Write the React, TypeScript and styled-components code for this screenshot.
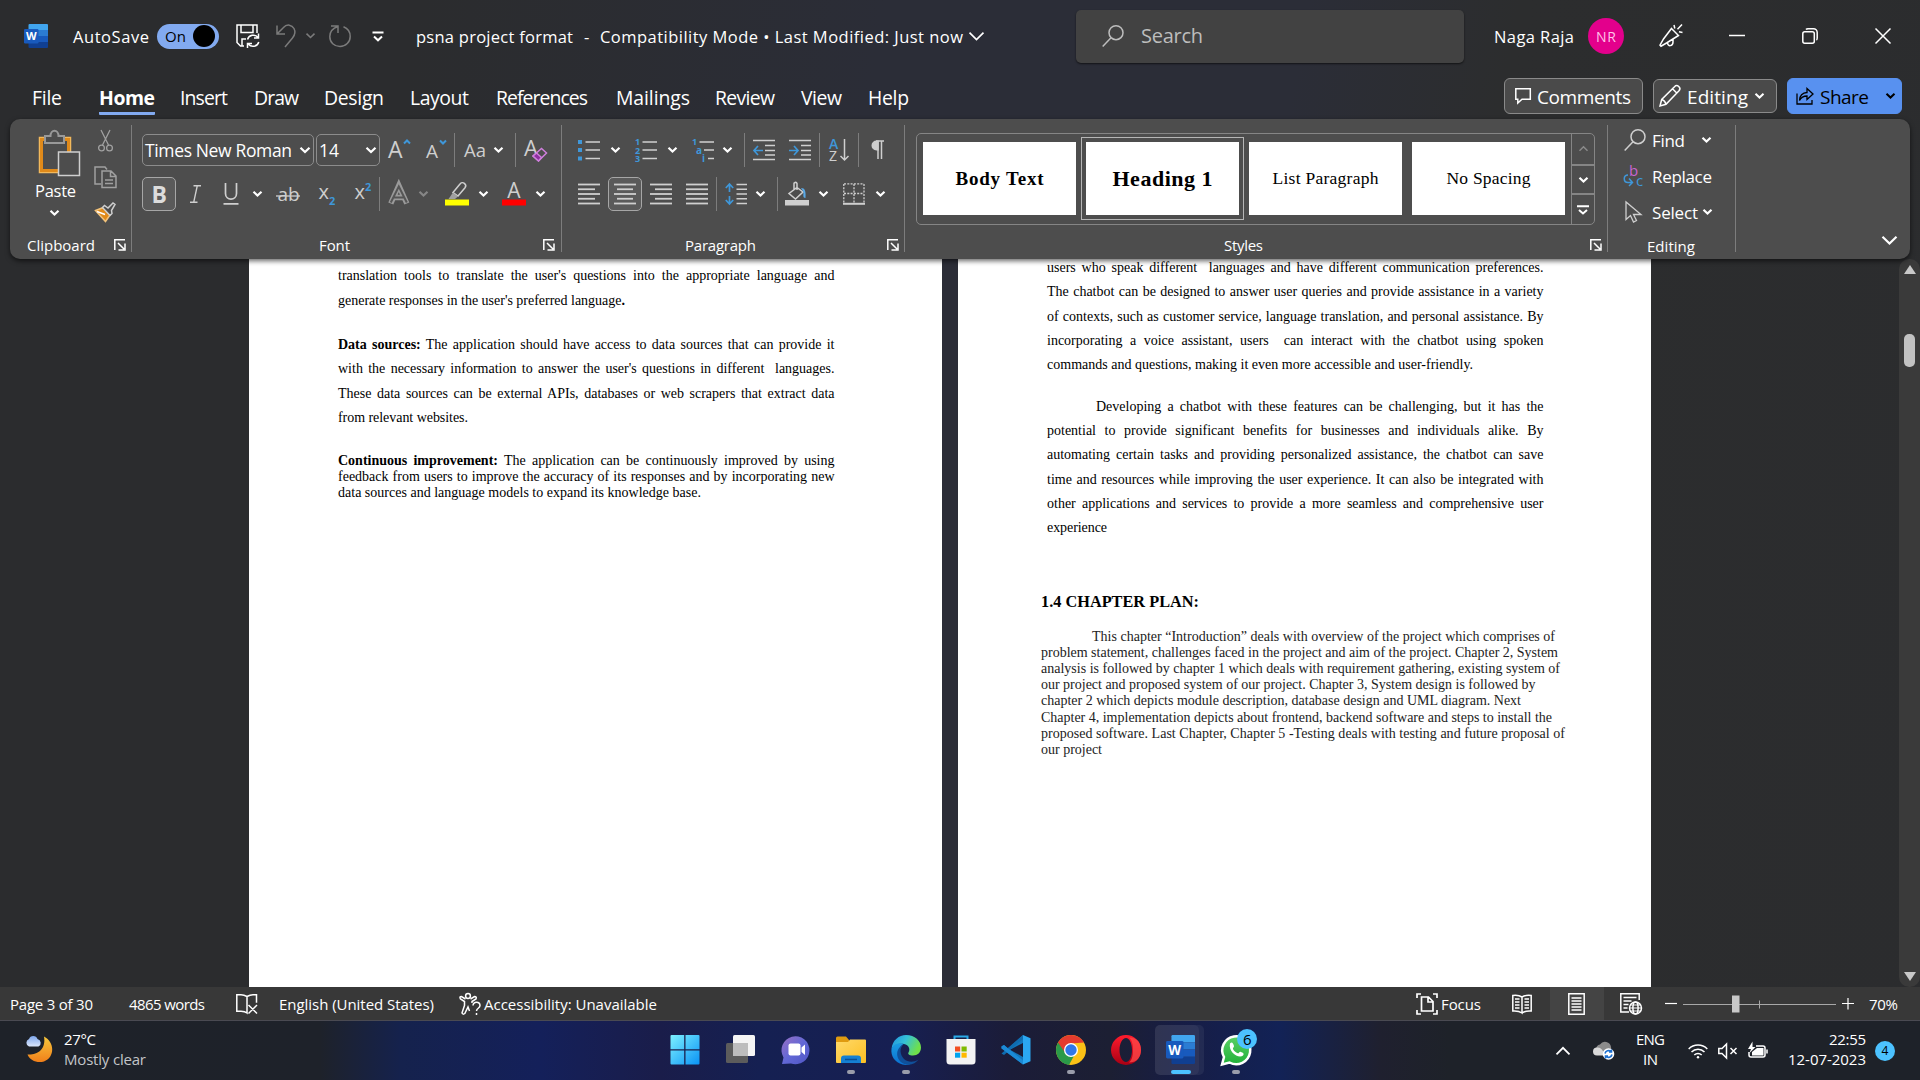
import React, { useLayoutEffect, useRef, useState } from 'react';
import styled, { createGlobalStyle, css } from 'styled-components';

const UI = '"Open Sans", "Noto Sans", sans-serif';
const SERIF = '"Liberation Serif", "Times New Roman", serif';
const INK = '#cfcfcf';
const BLUE = '#3f97d9';

const Global = createGlobalStyle`
  * { box-sizing: border-box; }
  html, body { margin: 0; padding: 0; overflow: hidden; }
  body { font-family: ${UI}; color: #fff; background: #2b2c2e; }
`;

const Screen = styled.div`
  width: 1920px;
  height: 1080px;
  display: flex;
  flex-direction: column;
  overflow: hidden;
  background: linear-gradient(100deg, #2b2c2e 0%, #2b2c2e 20%, #2b2d37 42%, #2b2d37 62%, #2c2d2e 72%, #2b2c2e 100%);
`;

/* ---------- shared pieces ---------- */

const FitSpan = styled.span<{ $size: number; $w: number; $color?: string; $weight?: number; $serif?: boolean }>`
  display: block;
  flex: none;
  width: ${(p) => p.$w}px;
  font-family: ${(p) => (p.$serif ? SERIF : UI)};
  font-size: ${(p) => p.$size}px;
  font-weight: ${(p) => p.$weight ?? 400};
  color: ${(p) => p.$color ?? 'inherit'};
  white-space: pre;
`;

interface TextProps {
  w: number;
  size?: number;
  color?: string;
  weight?: number;
  serif?: boolean;
  justify?: boolean;
  children: React.ReactNode;
}

/* A single line of text that is tracked out (or justified) to a measure. */
function Text({ w, size = 15, color, weight, serif, justify, children }: TextProps) {
  const inner = useRef<HTMLSpanElement>(null);
  const [space, setSpace] = useState(0);
  useLayoutEffect(() => {
    const el = inner.current;
    if (!el) return;
    const text = el.textContent ?? '';
    const natural = el.getBoundingClientRect().width;
    const slots = justify ? text.split(' ').length - 1 : text.length - 1;
    if (slots > 0) setSpace((w - natural) / slots);
  }, []);
  return (
    <FitSpan $size={size} $w={w} $color={color} $weight={weight} $serif={serif}>
      <span ref={inner} style={justify ? { wordSpacing: space } : { letterSpacing: space }}>
        {children}
      </span>
    </FitSpan>
  );
}

const Slot = styled.div<{ $ml?: number; $w?: number }>`
  flex: none;
  display: flex;
  align-items: center;
  justify-content: center;
  margin-left: ${(p) => p.$ml ?? 0}px;
  ${(p) => p.$w && css`width: ${p.$w}px;`}
`;

const Svg = styled.svg`
  display: block;
  flex: none;
  overflow: visible;
  fill: none;
  stroke: ${INK};
  stroke-width: 1.5;
`;

const Glyph = styled.text<{ $size: number; $fill?: string; $weight?: number }>`
  font-family: ${UI};
  font-size: ${(p) => p.$size}px;
  font-weight: ${(p) => p.$weight ?? 400};
  fill: ${(p) => p.$fill ?? INK};
  stroke: none;
`;

const Chevron = ({ w = 9, color = '#fff', sw = 2.2, up }: { w?: number; color?: string; sw?: number; up?: boolean }) => (
  <Svg width={w} height={w / 2 + 1} viewBox={`0 0 ${w} ${w / 2 + 1}`} stroke={color}>
    <path
      stroke={color}
      strokeWidth={sw}
      d={up ? `M.5 ${w / 2 + 0.3}L${w / 2} .8L${w - 0.5} ${w / 2 + 0.3}` : `M.5 .7L${w / 2} ${w / 2}L${w - 0.5} .7`}
    />
  </Svg>
);

/* ---------- title bar ---------- */

const TitleBar = styled.header`
  flex: none;
  height: 72px;
  display: flex;
  align-items: center;
`;

const TitleText = styled.div<{ $ml: number }>`
  flex: none;
  margin-left: ${(p) => p.$ml}px;
  padding-top: 1px;
`;

const Toggle = styled.div`
  width: 62px;
  height: 25px;
  border-radius: 13px;
  background: #82aaf0;
  display: flex;
  align-items: center;
  justify-content: space-between;
  padding: 0 4px 0 8px;
  color: #000;
`;

const Knob = styled.div`
  width: 22px;
  height: 22px;
  border-radius: 50%;
  background: #000;
`;

const SearchBox = styled.div`
  width: 388px;
  height: 53px;
  padding-left: 26px;
  display: flex;
  align-items: center;
  gap: 17px;
  border-radius: 5px;
  background: #424242;
  box-shadow: 0 1px 2px rgba(0, 0, 0, 0.6);
`;

const SearchText = styled.div`
  margin-top: -2px;
`;

const Avatar = styled.div`
  width: 36px;
  height: 36px;
  border-radius: 50%;
  background: #e3008c;
  display: flex;
  align-items: center;
  justify-content: center;
`;

const WordLogo = ({ size = 24 }: { size?: number }) => (
  <Svg width={size} height={size} viewBox="0 0 24 24" stroke="none">
    <g stroke="none">
      <path d="M4.5 1a1 1 0 0 1 1-1h17.500a1 1 0 0 1 1 1v5H4.500z" fill="#41a5ee" />
      <path d="M4.500 6H24v6H4.500z" fill="#2b7cd3" />
      <path d="M4.500 12H24v6H4.500z" fill="#185abd" />
      <path d="M4.500 18H24v5a1 1 0 0 1-1 1H5.500a1 1 0 0 1-1-1z" fill="#103f91" />
      <rect x="0" y="5" width="14.500" height="14.500" rx="1.200" fill="#185abd" />
      <Glyph x="7.200" y="16.300" textAnchor="middle" $size={11} $fill="#fff" $weight={700}>W</Glyph>
    </g>
  </Svg>
);

function Title() {
  return (
    <TitleBar>
      <Slot $ml={24} $w={24}><WordLogo /></Slot>
      <Slot $ml={25}><Text w={76} size={16.5}>AutoSave</Text></Slot>
      <Slot $ml={8}>
        <Toggle>
          <Text w={21}>On</Text>
          <Knob />
        </Toggle>
      </Slot>
      <Slot $ml={17} $w={24}>
        <Svg width="24" height="24" viewBox="0 0 24 24">
          <g stroke="#fff">
            <path d="M8 22H4.500L1 18.500V1h20v8M5 1v7.500h12V1M6 22v-7h4" />
            <path d="M11.500 15.500a6 6 0 0 1 10.500-2M22.500 9.500v4.500h-4.500M22.800 18a6 6 0 0 1-10.500 2M11.500 24v-4.500H16" />
          </g>
        </Svg>
      </Slot>
      <Slot $ml={16} $w={20}>
        <Svg width="20" height="24" viewBox="0 0 20 24">
          <path stroke="#7b7b7b" d="M1 1.500V10h8M1.500 9.500L7.500 3.500C11-.5 16 1 18 4.500c1.800 3.500.5 7-1.500 9.500L9 23" />
        </Svg>
      </Slot>
      <Slot $ml={10} $w={9}><Chevron color="#7b7b7b" sw={1.6} /></Slot>
      <Slot $ml={14} $w={22}>
        <Svg width="22" height="24" viewBox="0 0 22 24">
          <path stroke="#7b7b7b" d="M2 2h7v7M9 2.500C3 4.500.8 8.500.8 12.500c0 6 4.500 10 10.200 10s10.200-4.500 10.200-10c0-4.500-2.500-8-6.700-9.700" />
        </Svg>
      </Slot>
      <Slot $ml={21} $w={12}>
        <Svg width="12" height="11" viewBox="0 0 12 11">
          <path stroke="#fff" strokeWidth="2" d="M.5 1.500h11M2 5.500L6 9.300l4-3.800" />
        </Svg>
      </Slot>
      <TitleText $ml={32}><Text w={157} size={16.5}>psna project format</Text></TitleText>
      <TitleText $ml={11}><Text w={5} size={16.5}>-</Text></TitleText>
      <TitleText $ml={11}><Text w={363} size={16.5}>Compatibility Mode • Last Modified: Just now</Text></TitleText>
      <Slot $ml={6} $w={15}><Chevron w={15} sw={1.7} /></Slot>
      <Slot $ml={92}>
        <SearchBox>
          <Svg width="22" height="22" viewBox="0 0 22 22">
            <g stroke="#bdbdbd"><circle cx="14" cy="7.700" r="7" /><path d="M9 12.700L.7 21.500" /></g>
          </Svg>
          <SearchText><Text w={62} size={20} color="#bdbdbd">Search</Text></SearchText>
        </SearchBox>
      </Slot>
      <TitleText $ml={30}><Text w={80} size={16.5}>Naga Raja</Text></TitleText>
      <Slot $ml={14}><Avatar><Text w={20} size={14} color="#ffc4e8">NR</Text></Avatar></Slot>
      <Slot $ml={35} $w={24}>
        <Svg width="24" height="24" viewBox="0 0 24 24">
          <path stroke="#fff" d="M12.500 4.500l7 7L7.500 19l-5.500 3.200L1 21.200 4.500 15zM8.500 18.500c0 4.500 5.500 4 5.500-.5v-3M15 1l.8 3.500M23 .5l-4.500 4.800M23.500 8.500l-3.500-.8" />
        </Svg>
      </Slot>
      <Slot $ml={46} $w={16}>
        <Svg width="16" height="16" viewBox="0 0 16 16"><path stroke="#fff" d="M0 7.500h16" /></Svg>
      </Slot>
      <Slot $ml={57} $w={16}>
        <Svg width="16" height="16" viewBox="0 0 16 16">
          <g stroke="#fff"><rect x=".8" y="3.800" width="11.500" height="11.500" rx="2" /><path d="M4 1.500Q4.500.8 6 .8h5.500a3.700 3.700 0 0 1 3.700 3.700v5.500q0 1.500-.8 2" /></g>
        </Svg>
      </Slot>
      <Slot $ml={57} $w={16}>
        <Svg width="16" height="16" viewBox="0 0 16 16"><path stroke="#fff" d="M.5 .5l15 15M15.500 .5l-15 15" /></Svg>
      </Slot>
    </TitleBar>
  );
}

/* ---------- tabs ---------- */

const TabRow = styled.nav`
  flex: none;
  height: 47px;
  display: flex;
  align-items: flex-start;
`;

const Tab = styled.div<{ $ml: number; $active?: boolean }>`
  flex: none;
  margin-left: ${(p) => p.$ml}px;
  margin-top: 12px;
  height: 31px;
  line-height: 28px;
  border-bottom: 3px solid ${(p) => (p.$active ? '#82aaf0' : 'transparent')};
  border-radius: 1px;
`;

const TabButton = styled.div<{ $ml: number; $w: number; $h: number; $share?: boolean }>`
  flex: none;
  margin-left: ${(p) => p.$ml}px;
  margin-top: ${(p) => 24 - p.$h / 2}px;
  width: ${(p) => p.$w}px;
  height: ${(p) => p.$h}px;
  display: flex;
  align-items: center;
  border-radius: 6px;
  color: ${(p) => (p.$share ? '#000' : '#fff')};
  background: ${(p) => (p.$share ? '#5891f0' : '#4a4a4a')};
  border: 1px solid ${(p) => (p.$share ? '#5891f0' : '#8a8a8a')};
`;

const TabButtonText = styled.div`
  margin-left: 6px;
  padding-top: 1px;
`;

const TABS: [string, number, number][] = [
  ['File', 32, 30], ['Home', 37, 56], ['Insert', 25, 48], ['Draw', 26, 45], ['Design', 25, 60],
  ['Layout', 26, 59], ['References', 27, 92], ['Mailings', 28, 74], ['Review', 25, 60], ['View', 26, 41], ['Help', 26, 41],
];

function Tabs() {
  return (
    <TabRow>
      {TABS.map(([name, ml, w]) => (
        <Tab key={name} $ml={ml} $active={name === 'Home'}>
          <Text w={w} size={19.4} weight={name === 'Home' ? 700 : 400}>{name}</Text>
        </Tab>
      ))}
      <TabButton $ml={595} $w={139} $h={36}>
        <Slot $ml={10} $w={16}>
          <Svg width="16" height="16" viewBox="0 0 16 16"><path stroke="#fff" d="M.8 .8h14.500v10.500H7L2.800 15v-3.700H.8z" /></Svg>
        </Slot>
        <TabButtonText><Text w={94} size={19}>Comments</Text></TabButtonText>
      </TabButton>
      <TabButton $ml={10} $w={124} $h={34}>
        <Slot $ml={5} $w={22}>
          <Svg width="22" height="22" viewBox="0 0 22 22"><path stroke="#fff" d="M1 21l1.700-6.500L15.500 1.700a2.800 2.800 0 0 1 4.500 4L7 19.300zM13.500 3.700l4.500 4.500M2.700 14.500c2 .5 3.500 2 4.300 4.800" /></Svg>
        </Slot>
        <TabButtonText><Text w={61} size={19}>Editing</Text></TabButtonText>
        <Slot $ml={7} $w={9}><Chevron sw={2} /></Slot>
      </TabButton>
      <TabButton $ml={10} $w={115} $h={36} $share>
        <Slot $ml={8} $w={18}>
          <Svg width="18" height="18" viewBox="0 0 18 18"><path stroke="#000" strokeWidth="1.300" d="M1 6.500V17h15v-4M3.500 13.500C3.500 9 6.500 5.500 11 5.500V1.500l6 5.500-6 5.500V9C7.500 9 5 10.500 3.500 13.500z" /></Svg>
        </Slot>
        <TabButtonText><Text w={49} size={19}>Share</Text></TabButtonText>
        <Slot $ml={17} $w={9}><Chevron color="#000" sw={2} /></Slot>
      </TabButton>
    </TabRow>
  );
}

/* ---------- ribbon ---------- */

const Ribbon = styled.section`
  flex: none;
  position: relative;
  z-index: 1;
  margin: 0 10px;
  height: 140px;
  display: flex;
  border-radius: 10px;
  background: #4d4d4d;
  box-shadow: 0 2px 5px rgba(0, 0, 0, 0.6);
`;

const Group = styled.div<{ $w: number }>`
  flex: none;
  width: ${(p) => p.$w}px;
  height: 127px;
  margin-top: 6px;
  border-right: 1px solid #7d7d7d;
  display: flex;
  flex-direction: column;
`;

const GroupBody = styled.div`
  flex: none;
  height: 108px;
  padding-top: 8px;
`;

const GroupFooter = styled.div`
  height: 23px;
  flex: none;
  display: flex;
  align-items: center;
`;

const ToolRow = styled.div<{ $h: number; $mt?: number }>`
  height: ${(p) => p.$h}px;
  margin-top: ${(p) => p.$mt ?? 0}px;
  display: flex;
  align-items: center;
`;

const Divider = styled.div<{ $ml: number }>`
  flex: none;
  width: 1px;
  height: 34px;
  margin-left: ${(p) => p.$ml}px;
  background: #7d7d7d;
`;

const Combo = styled.div<{ $ml: number; $w: number }>`
  flex: none;
  margin-left: ${(p) => p.$ml}px;
  width: ${(p) => p.$w}px;
  height: 32px;
  padding: 0 3px 0 2px;
  display: flex;
  align-items: center;
  justify-content: space-between;
  border: 1px solid #8c8c8c;
  border-radius: 5px;
`;

const Pressed = styled.div<{ $ml: number }>`
  flex: none;
  margin-left: ${(p) => p.$ml}px;
  width: 34px;
  height: 34px;
  display: flex;
  align-items: center;
  justify-content: center;
  border: 1px solid #a6a6a6;
  border-radius: 5px;
  background: #5a5a5a;
`;

const Launcher = () => (
  <Svg width="12" height="12" viewBox="0 0 12 12"><path stroke="#fff" d="M.8 11V.8H11M4 4l6 6M11 4.500V11H4.500" /></Svg>
);

const Drop = ({ ml, dim }: { ml: number; dim?: boolean }) => (
  <Slot $ml={ml} $w={9}><Chevron color={dim ? '#868686' : '#fff'} /></Slot>
);

const ClipCols = styled.div`
  flex: none;
  display: flex;
  height: 108px;
`;

const PasteCol = styled.div`
  width: 83px;
  display: flex;
  flex-direction: column;
  align-items: center;
  padding: 5px 0 0 15px;
`;

const SmallCol = styled.div`
  width: 24px;
  padding-top: 5px;
  display: flex;
  flex-direction: column;
  align-items: center;
  gap: 14px;
`;

const PasteLabel = styled.div`
  margin: 3px 7px 8px 0;
`;

const PasteDrop = styled.div`
  margin-right: 10px;
`;

function Clipboard() {
  return (
    <Group $w={122}>
      <ClipCols>
        <PasteCol>
          <Svg width="42" height="46" viewBox="0 0 42 46">
            <rect x="1.500" y="7.500" width="31" height="35" stroke="#f2b95c" strokeWidth="1.500" />
            <rect x="3.500" y="9.500" width="27" height="31" stroke="#e08a1a" strokeWidth="3" />
            <path d="M7 13V6h5.500c0-7 8-7 8 0H26v7z" fill="#4d4d4d" stroke="#999" strokeWidth="2" />
            <rect x="20.500" y="22" width="21" height="23.500" fill="#4d4d4d" stroke="#cfcfcf" />
          </Svg>
          <PasteLabel><Text w={41} size={16.5}>Paste</Text></PasteLabel>
          <PasteDrop><Chevron /></PasteDrop>
        </PasteCol>
        <SmallCol>
          <Svg width="15" height="22" viewBox="0 0 15 22">
            <g stroke="#a0a0a0" strokeWidth="1.300"><path d="M3 0l7.500 15M12 0L4.500 15" /><circle cx="3.500" cy="18" r="2.900" /><circle cx="11.500" cy="18" r="2.900" /></g>
          </Svg>
          <Svg width="23" height="22" viewBox="0 0 23 22">
            <path stroke="#a0a0a0" d="M7 18H1V1h10l2 2.500M8 5h9l5 5v11.500H8zM16.500 5v5.500H22M11 14h8M11 17.500h8" />
          </Svg>
          <Svg width="22" height="20" viewBox="0 0 22 20">
            <path d="M1.500 8.500L9.500 5.500 16 13l-4.500 6.500z" fill="#e08a1a" stroke="#f2c27a" />
            <path d="M3 9.500l8 3" stroke="#fff" />
            <path d="M8.500 5.500l2-2 3.500 2.500L19 1l2 1.500-3.500 6 .5 3-2 2z" fill="#4d4d4d" stroke="#cfcfcf" />
          </Svg>
        </SmallCol>
      </ClipCols>
      <GroupFooter>
        <Slot $ml={17}><Text w={68}>Clipboard</Text></Slot>
        <Slot $ml={19} $w={12}><Launcher /></Slot>
      </GroupFooter>
    </Group>
  );
}

function FontGroup() {
  return (
    <Group $w={430}>
      <GroupBody>
        <ToolRow $h={33}>
          <Combo $ml={10} $w={172}><Text w={147} size={17.5}>Times New Roman</Text><Chevron w={10} /></Combo>
          <Combo $ml={2} $w={64}><Text w={20} size={17.5}>14</Text><Chevron w={10} /></Combo>
          <Slot $ml={9} $w={22}>
            <Svg width="22" height="22" viewBox="0 0 22 22"><Glyph x="-1" y="18.500" $size={23}>A</Glyph><path stroke={BLUE} strokeWidth="2" d="M15 4.500l3-3 3 3" /></Svg>
          </Slot>
          <Slot $ml={16} $w={21}>
            <Svg width="21" height="22" viewBox="0 0 21 22"><Glyph x="-1" y="18.500" $size={19}>A</Glyph><path stroke={BLUE} strokeWidth="2" d="M13 1.500l3 3 3-3" /></Svg>
          </Slot>
          <Divider $ml={6} />
          <Slot $ml={9} $w={22}><Text w={22} size={18.5} color={INK}>Aa</Text></Slot>
          <Drop ml={8} />
          <Divider $ml={12} />
          <Slot $ml={8} $w={23}>
            <Svg width="23" height="24" viewBox="0 0 23 24">
              <Glyph x="0" y="18" $size={22}>A</Glyph>
              <path d="M9 18l8.500-7.500 5 4.500-8 8z" fill="#4d4d4d" stroke="#cf7fdc" />
              <path d="M9 18l3.500-3 5 4.500-3 3.500z" fill="#8e2fa0" stroke="#cf7fdc" />
            </Svg>
          </Slot>
        </ToolRow>
        <ToolRow $h={34} $mt={11}>
          <Pressed $ml={10}><Text w={15} size={23} weight={700} color="#dcdcdc">B</Text></Pressed>
          <Slot $ml={14} $w={11}>
            <Svg width="11" height="18" viewBox="0 0 11 18"><path strokeWidth="1.400" d="M3.500 .7H11M0 17.300h7.500M7.300 .7L3.700 17.300" /></Svg>
          </Slot>
          <Slot $ml={22} $w={16}>
            <Svg width="16" height="22" viewBox="0 0 16 22"><path strokeWidth="1.700" d="M2.500 0v10.500c0 7.500 11 7.500 11 0V0M.5 20.800h15" /></Svg>
          </Slot>
          <Drop ml={14} />
          <Slot $ml={14} $w={24}>
            <Svg width="24" height="20" viewBox="0 0 24 20"><Glyph x="1.500" y="17" $size={19}>ab</Glyph><path strokeWidth="1.300" d="M0 12h24" /></Svg>
          </Slot>
          <Slot $ml={19} $w={16}>
            <Svg width="16" height="22" viewBox="0 0 16 22"><Glyph x="-.5" y="16" $size={20}>x</Glyph><Glyph x="10" y="22" $size={11} $fill={BLUE} $weight={700}>2</Glyph></Svg>
          </Slot>
          <Slot $ml={20} $w={16}>
            <Svg width="16" height="22" viewBox="0 0 16 22"><Glyph x="-.5" y="16" $size={20}>x</Glyph><Glyph x="10" y="8" $size={11} $fill={BLUE} $weight={700}>2</Glyph></Svg>
          </Slot>
          <Divider $ml={8} />
          <Slot $ml={8} $w={22}>
            <Svg width="22" height="20" viewBox="0 0 22 20"><path stroke="#9a9a9a" strokeWidth="5.500" d="M2.800 19.500L10.800 1.500 18.800 19.500M6 13.500h10" /><path stroke="#555" strokeWidth="2" d="M2.800 18.500L10.800 2.500 18.800 18.500M6 13.500h10" /></Svg>
          </Slot>
          <Drop ml={9} dim />
          <Slot $ml={17} $w={24}>
            <Svg width="24" height="24" viewBox="0 0 24 24">
              <path d="M8 10.500l7-8.500a2.800 2.800 0 0 1 5 3.700L13 14z" />
              <path d="M8 10.500l5 4-3 2.500H3.500z" fill="#a0a0a0" stroke="none" />
              <path d="M0 17.500h24v6H0z" fill="#ff0" stroke="none" />
            </Svg>
          </Slot>
          <Drop ml={10} />
          <Slot $ml={14} $w={24}>
            <Svg width="24" height="24" viewBox="0 0 24 24"><Glyph x="12" y="15.500" textAnchor="middle" $size={21}>A</Glyph><path d="M0 17.500h24v6H0z" fill="#f00" stroke="none" /></Svg>
          </Slot>
          <Drop ml={10} />
        </ToolRow>
      </GroupBody>
      <GroupFooter>
        <Slot $ml={187}><Text w={31}>Font</Text></Slot>
        <Slot $ml={193} $w={12}><Launcher /></Slot>
      </GroupFooter>
    </Group>
  );
}

const Lines = ({ rows }: { rows: [number, number][] }) => (
  <Svg width="22" height="22" viewBox="0 0 22 22">
    {rows.map(([a, b], i) => <path key={i} strokeWidth="1.800" d={`M${a} ${1.5 + i * (19 / (rows.length - 1))}H${b}`} />)}
  </Svg>
);

function ParagraphGroup() {
  return (
    <Group $w={343}>
      <GroupBody>
        <ToolRow $h={33}>
          <Slot $ml={16} $w={22}>
            <Svg width="22" height="22" viewBox="0 0 22 22"><path d="M7.500 3h14.500M7.500 11h14.500M7.500 19.500h14.500" /><path fill={BLUE} stroke="none" d="M0 1h4v4H0zM0 9h4v4H0zM0 17.500h4v4H0z" /></Svg>
          </Slot>
          <Drop ml={11} />
          <Slot $ml={15} $w={22}>
            <Svg width="22" height="24" viewBox="0 0 22 24">
              <path d="M7.500 4h14.500M7.500 12h14.500M7.500 20.500h14.500" />
              <Glyph x="0" y="7" $size={9} $fill={BLUE} $weight={700}>1</Glyph><Glyph x="0" y="15.500" $size={9} $fill={BLUE} $weight={700}>2</Glyph><Glyph x="0" y="24" $size={9} $fill={BLUE} $weight={700}>3</Glyph>
            </Svg>
          </Slot>
          <Drop ml={11} />
          <Slot $ml={15} $w={22}>
            <Svg width="22" height="24" viewBox="0 0 22 24">
              <path d="M7.500 4H22M12 12h10M16 20.500h6" />
              <Glyph x="0" y="7" $size={9} $fill={BLUE} $weight={700}>1</Glyph><Glyph x="4" y="15.500" $size={10} $fill={BLUE} $weight={700}>a</Glyph><Glyph x="10" y="24" $size={10} $fill={BLUE} $weight={700}>i</Glyph>
            </Svg>
          </Slot>
          <Drop ml={9} />
          <Divider $ml={12} />
          <Slot $ml={8} $w={22}>
            <Svg width="22" height="22" viewBox="0 0 22 22"><path d="M0 1.500h22M12 6.500h10M12 11.500h10M12 16h10M0 20.500h22" /><path stroke={BLUE} strokeWidth="1.700" d="M1 11.500h9M5 7l-4 4.500 4 4.500" /></Svg>
          </Slot>
          <Slot $ml={14} $w={22}>
            <Svg width="22" height="22" viewBox="0 0 22 22"><path d="M0 1.500h22M12 6.500h10M12 11.500h10M12 16h10M0 20.500h22" /><path stroke={BLUE} strokeWidth="1.700" d="M0 11.500h9M5 7l4 4.500-4 4.500" /></Svg>
          </Slot>
          <Divider $ml={8} />
          <Slot $ml={9} $w={20}>
            <Svg width="20" height="24" viewBox="0 0 20 24">
              <Glyph x="0" y="10.500" $size={14} $fill={BLUE} $weight={600}>A</Glyph><Glyph x="0" y="23" $size={14}>Z</Glyph>
              <path d="M15.500 1v21M11.500 18l4 4 4-4" />
            </Svg>
          </Slot>
          <Divider $ml={9} />
          <Slot $ml={12} $w={13}>
            <Svg width="13" height="19" viewBox="0 0 13 19"><path d="M7 1.200H5.500a4 4 0 0 0 0 8.500H7z" fill={INK} /><path d="M7 1v18M10.500 1v18M5 1h8" /></Svg>
          </Slot>
        </ToolRow>
        <ToolRow $h={34} $mt={11}>
          <Slot $ml={16}><Lines rows={[[0, 22], [0, 17], [0, 22], [0, 17], [0, 22]]} /></Slot>
          <Pressed $ml={8}><Lines rows={[[0, 22], [3, 19], [0, 22], [3, 19], [0, 22]]} /></Pressed>
          <Slot $ml={8}><Lines rows={[[0, 22], [5, 22], [0, 22], [5, 22], [0, 22]]} /></Slot>
          <Slot $ml={14}><Lines rows={[[0, 22], [0, 22], [0, 22], [0, 22], [0, 22]]} /></Slot>
          <Divider $ml={8} />
          <Slot $ml={8} $w={22}>
            <Svg width="22" height="22" viewBox="0 0 22 22"><path d="M11.500 1.500H22M11.500 6.300H22M11.500 11H22M11.500 15.800H22M11.500 20.500H22" /><path stroke={BLUE} strokeWidth="1.700" d="M4.500 1v8M.8 5L4.500 1l3.700 4M4.500 13v8M.8 17l3.700 4L8.200 17" /></Svg>
          </Slot>
          <Drop ml={9} />
          <Divider $ml={12} />
          <Slot $ml={7} $w={24}>
            <Svg width="24" height="24" viewBox="0 0 24 24">
              <path d="M12 5.500l6 4.500-7.500 7L4 11.500zM12 8V1.500a1.500 1.500 0 0 0-3 1V8" />
              <path d="M16 6c4 0 5 3 4.500 10-3 0-2-3.500-2-6z" fill="#5aa9e6" stroke="none" />
              <path d="M0 18h24v5.500H0z" fill={INK} stroke="none" />
            </Svg>
          </Slot>
          <Drop ml={10} />
          <Slot $ml={15} $w={22}>
            <Svg width="22" height="22" viewBox="0 0 22 22"><path strokeDasharray="2 1.300" strokeWidth="1.300" d="M1 .8h20M1 10.500h20M.8 1v19M11 1v19M21 1v19" /><path strokeWidth="2" d="M0 20.800h22" /></Svg>
          </Slot>
          <Drop ml={11} />
        </ToolRow>
      </GroupBody>
      <GroupFooter>
        <Slot $ml={123}><Text w={71}>Paragraph</Text></Slot>
        <Slot $ml={131} $w={12}><Launcher /></Slot>
      </GroupFooter>
    </Group>
  );
}

const Gallery = styled.div`
  width: 679px;
  height: 92px;
  margin-left: 11px;
  display: flex;
  align-items: flex-start;
  padding-left: 1px;
  border: 1px solid #858585;
  border-radius: 5px;
`;

const StyleFrame = styled.div<{ $on?: boolean }>`
  flex: none;
  width: 163px;
  height: 83px;
  margin-top: 3px;
  padding: 4px;
  border: 1px solid ${(p) => (p.$on ? '#b5b5b5' : 'transparent')};
`;

const StyleCard = styled.div`
  width: 153px;
  height: 73px;
  display: flex;
  align-items: center;
  justify-content: center;
  background: #fff;
  color: #000;
`;

const Scroller = styled.div`
  margin-left: 1px;
  width: 24px;
  height: 90px;
  display: grid;
  grid-template-rows: 32px 29px 29px;
  border-left: 1px solid #858585;
`;

const ScrollCell = styled.div`
  display: flex;
  align-items: center;
  justify-content: center;
  &:not(:last-child) { border-bottom: 2px solid #858585; }
`;

const STYLES: [string, number, number, number][] = [
  ['Body Text', 88, 19, 700], ['Heading 1', 100, 22, 700], ['List Paragraph', 106, 17.5, 400], ['No Spacing', 84, 17.5, 400],
];

function StylesGroup() {
  return (
    <Group $w={703}>
      <GroupBody>
        <Gallery>
          {STYLES.map(([name, w, size, weight]) => (
            <StyleFrame key={name} $on={name === 'Heading 1'}>
              <StyleCard><Text serif w={w} size={size} weight={weight}>{name}</Text></StyleCard>
            </StyleFrame>
          ))}
          <Scroller>
            <ScrollCell><Chevron up color="#8a8a8a" sw={1.5} /></ScrollCell>
            <ScrollCell><Chevron /></ScrollCell>
            <ScrollCell><Svg width="12" height="10" viewBox="0 0 12 10"><path stroke="#fff" strokeWidth="2" d="M0 1.200h12M2 5l4 3.500L10 5" /></Svg></ScrollCell>
          </Scroller>
        </Gallery>
      </GroupBody>
      <GroupFooter>
        <Slot $ml={319}><Text w={39}>Styles</Text></Slot>
        <Slot $ml={327} $w={12}><Launcher /></Slot>
      </GroupFooter>
    </Group>
  );
}

const EditList = styled.div`
  flex: none;
  height: 106px;
  margin-top: -3px;
  margin-bottom: 6px;
  padding-left: 15px;
`;

const EditRow = styled.div`
  height: 36px;
  display: flex;
  align-items: center;
`;

const CollapseArea = styled.div`
  flex: 1;
  display: flex;
  justify-content: flex-end;
  align-items: flex-end;
  padding: 0 13px 15px 0;
`;

function EditingGroup() {
  return (
    <Group $w={128}>
      <EditList>
        <EditRow>
          <Slot $w={24}><Svg width="22" height="22" viewBox="0 0 22 22"><circle cx="14" cy="7.700" r="7" /><path d="M9 12.700L.7 21.500" /></Svg></Slot>
          <Slot $ml={5}><Text w={33} size={17}>Find</Text></Slot>
          <Drop ml={17} />
        </EditRow>
        <EditRow>
          <Slot $w={22}>
            <Svg width="22" height="24" viewBox="0 0 22 24">
              <Glyph x="6" y="11.500" $size={15} $fill="#c864d2">b</Glyph><Glyph x="13" y="22" $size={15} $fill={BLUE}>c</Glyph>
              <path stroke={BLUE} d="M5 11c-5 0-5 7.500 0 7.500h4M6 14.500l3.500 4L6 22" />
            </Svg>
          </Slot>
          <Slot $ml={7}><Text w={60} size={17}>Replace</Text></Slot>
        </EditRow>
        <EditRow>
          <Slot $ml={2} $w={17}><Svg width="17" height="22" viewBox="0 0 17 22"><path strokeWidth="1.300" d="M1 1v17.500l4.500-4 3 6.500 3-1.500-3-6H16z" /></Svg></Slot>
          <Slot $ml={10}><Text w={46} size={17}>Select</Text></Slot>
          <Drop ml={5} />
        </EditRow>
      </EditList>
      <GroupFooter>
        <Slot $ml={39}><Text w={48}>Editing</Text></Slot>
      </GroupFooter>
    </Group>
  );
}

/* ---------- document ---------- */

const DocArea = styled.main`
  flex: none;
  height: 728px;
  display: flex;
  overflow: hidden;
  color: #000;
`;

const Page = styled.article<{ $ml: number; $w: number; $pl: number }>`
  flex: none;
  margin-left: ${(p) => p.$ml}px;
  width: ${(p) => p.$w}px;
  height: 728px;
  padding-left: ${(p) => p.$pl}px;
  overflow: hidden;
  display: flex;
  flex-direction: column;
  background: #fff;
`;

const Para = styled.div<{ $mt: number; $lh: number; $ml?: number; $color?: string }>`
  flex: none;
  margin-top: ${(p) => p.$mt}px;
  margin-left: ${(p) => p.$ml ?? 0}px;
  line-height: ${(p) => p.$lh}px;
  color: ${(p) => p.$color ?? '#000'};
`;

const Indent = styled.div<{ $w: number }>`
  padding-left: ${(p) => p.$w}px;
`;

const J = ({ children, w = 496.5 }: { children: React.ReactNode; w?: number }) => (
  <Text serif justify w={w} size={14}>{children}</Text>
);
const L = ({ children, w }: { children: React.ReactNode; w: number }) => (
  <Text serif w={w} size={14}>{children}</Text>
);

const Filler = styled.div`
  flex: 1;
`;

const ScrollTrack = styled.div`
  flex: none;
  width: 21px;
  display: flex;
  flex-direction: column;
  align-items: center;
  padding-bottom: 6px;
  background: #3a3a3a;
  border-radius: 10px;
`;

const ArrowHead = styled.div<{ $down?: boolean; $mt: number }>`
  margin-top: ${(p) => p.$mt}px;
  border-left: 6px solid transparent;
  border-right: 6px solid transparent;
  ${(p) => (p.$down ? 'border-top: 9px solid #c8c8c8;' : 'border-bottom: 9px solid #c8c8c8;')}
`;

const Thumb = styled.div`
  width: 11px;
  height: 33px;
  margin-top: 60px;
  border-radius: 5px;
  background: #c2c2c2;
`;

function Document() {
  return (
    <DocArea>
      <Page $ml={249} $w={693} $pl={89}>
        <Para $mt={5} $lh={24.5}>
          <J>translation tools to translate the user's questions into the appropriate language and</J>
          <L w={287}>generate responses in the user's preferred language<b>.</b></L>
        </Para>
        <Para $mt={20} $lh={24.4}>
          <J><b>Data sources:</b> The application should have access to data sources that can provide it</J>
          <J>with the necessary information to answer the user's questions in different  languages.</J>
          <J>These data sources can be external APIs, databases or web scrapers that extract data</J>
          <L w={130}>from relevant websites.</L>
        </Para>
        <Para $mt={22.4} $lh={16}>
          <J><b>Continuous improvement:</b> The application can be continuously improved by using</J>
          <J>feedback from users to improve the accuracy of its responses and by incorporating new</J>
          <L w={363}>data sources and language models to expand its knowledge base.</L>
        </Para>
      </Page>
      <Page $ml={16} $w={693} $pl={83}>
        <Para $mt={-3} $lh={24.3} $ml={6}>
          <J>users who speak different  languages and have different communication preferences.</J>
          <J>The chatbot can be designed to answer user queries and provide assistance in a variety</J>
          <J>of contexts, such as customer service, language translation, and personal assistance. By</J>
          <J>incorporating a voice assistant, users  can interact with the chatbot using spoken</J>
          <L w={426}>commands and questions, making it even more accessible and user-friendly.</L>
        </Para>
        <Para $mt={17.5} $lh={24.25} $ml={6}>
          <Indent $w={49}><J w={447.5}>Developing a chatbot with these features can be challenging, but it has the</J></Indent>
          <J>potential to provide significant benefits for businesses and individuals alike. By</J>
          <J>automating certain tasks and providing personalized assistance, the chatbot can save</J>
          <J>time and resources while improving the user experience. It can also be integrated with</J>
          <J>other applications and services to provide a more seamless and comprehensive user</J>
          <L w={60}>experience</L>
        </Para>
        <Para $mt={52} $lh={20}>
          <Text serif w={158} size={16.3} weight={700}>1.4 CHAPTER PLAN:</Text>
        </Para>
        <Para $mt={16.5} $lh={16.13} $color="#222">
          <Indent $w={51}><L w={463}>This chapter “Introduction” deals with overview of the project which comprises of</L></Indent>
          <L w={517}>problem statement, challenges faced in the project and aim of the project. Chapter 2, System</L>
          <L w={519}>analysis is followed by chapter 1 which deals with requirement gathering, existing system of</L>
          <L w={494.5}>our project and proposed system of our project. Chapter 3, System design is followed by</L>
          <L w={480}>chapter 2 which depicts module description, database design and UML diagram. Next</L>
          <L w={511}>Chapter 4, implementation depicts about frontend, backend software and steps to install the</L>
          <L w={524}>proposed software. Last Chapter, Chapter 5 -Testing deals with testing and future proposal of</L>
          <L w={61}>our project</L>
        </Para>
      </Page>
      <Filler />
      <ScrollTrack>
        <ArrowHead $mt={6} />
        <Thumb />
        <Filler />
        <ArrowHead $down $mt={0} />
      </ScrollTrack>
    </DocArea>
  );
}

/* ---------- status bar ---------- */

const StatusBar = styled.footer`
  flex: none;
  height: 34px;
  display: flex;
  align-items: center;
  background: #383838;
  border-bottom: 1px solid #4a4a52;
`;

const ViewOn = styled.div`
  flex: none;
  width: 54px;
  height: 33px;
  margin-left: 18px;
  padding-right: 1px;
  display: flex;
  align-items: center;
  justify-content: center;
  background: #444;
`;

function Status() {
  return (
    <StatusBar>
      <Slot $ml={10}><Text w={83}>Page 3 of 30</Text></Slot>
      <Slot $ml={36}><Text w={76}>4865 words</Text></Slot>
      <Slot $ml={31} $w={22}>
        <Svg width="22" height="20" viewBox="0 0 22 20"><path stroke="#fff" d="M11 2.500Q8 .8 5 .8H.8v16.500H5q4 0 6 1.700V2.500Q14 .8 17 .8h3.500v8M12.500 11l8.500 8.500M21 11l-8.500 8.500" /></Svg>
      </Slot>
      <Slot $ml={21}><Text w={155}>English (United States)</Text></Slot>
      <Slot $ml={25} $w={22}>
        <Svg width="22" height="22" viewBox="0 0 22 22">
          <g stroke="#fff" strokeWidth="1.500"><circle cx="9" cy="3" r="2.400" /><path d="M6.500 6L2.500 3.500Q0 3.500 1.500 6l4 2.500v4L3 20q1 2 2.800.5L9 14l1.500 4M11.500 6l4-2.500q2.500 0 1.500 2.500l-4 2.500v1.500" /><path d="M14 12.500c0-4.500 7-4 7 0 0 3-3.500 2.500-3.500 5.500M17.500 20v2" /></g>
        </Svg>
      </Slot>
      <Slot $ml={3}><Text w={173}>Accessibility: Unavailable</Text></Slot>
      <Slot $ml={759} $w={22}>
        <Svg width="22" height="22" viewBox="0 0 22 22"><path stroke="#fff" strokeWidth="1.700" d="M5 1H1v4M17 1h4v4M5 21H1v-4M17 21h4v-4M5.500 4h7L17 8.500V18H5.500zM12 4v5h5" /></Svg>
      </Slot>
      <Slot $ml={3}><Text w={40}>Focus</Text></Slot>
      <Slot $ml={31} $w={20}>
        <Svg width="20" height="20" viewBox="0 0 20 20"><path stroke="#fff" d="M10 3Q6.500.8.8 1.500v15.500Q6.500 16.500 10 19zM10 3Q13.500.8 19.200 1.500v15.500Q13.500 16.500 10 19M3 5h4.500M3 8h4.500M3 11h4.500M3 14h4.500M12.500 5H17M12.500 8H17M12.500 11H17M12.500 14H17" /></Svg>
      </Slot>
      <ViewOn>
        <Svg width="17" height="22" viewBox="0 0 17 22"><path stroke="#fff" d="M.8 .8h15.400v20.400H.8zM3.500 5h10M3.500 8h10M3.500 11h10M3.500 14h10M3.500 17h10" /></Svg>
      </ViewOn>
      <Slot $ml={16} $w={22}>
        <Svg width="22" height="22" viewBox="0 0 22 22">
          <g stroke="#fff"><path d="M9 19H.8V.8h18.400V7M3.500 4.500h13M3.500 8h8M3.500 11.500h5M3.500 15h4" /><circle cx="15.500" cy="15" r="6" /><ellipse cx="15.500" cy="15" rx="2.600" ry="6" /><path d="M9.500 15h12M10.500 12h10M10.500 18h10" strokeWidth="1" /></g>
        </Svg>
      </Slot>
      <Slot $ml={23} $w={12}><Svg width="12" height="12" viewBox="0 0 12 12"><path stroke="#fff" strokeWidth="1.200" d="M0 5.500h12" /></Svg></Slot>
      <Slot $ml={6} $w={153}>
        <Svg width="153" height="18" viewBox="0 0 153 18"><path stroke="#a8a8a8" strokeWidth="1" d="M0 9.500h153M76.500 5.500v8" /><path fill="#c8c8c8" stroke="none" d="M49 .5h7.500v17H49z" /></Svg>
      </Slot>
      <Slot $ml={6} $w={12}><Svg width="12" height="12" viewBox="0 0 12 12"><path stroke="#fff" strokeWidth="1.200" d="M0 5.500h12M6 0v11.500" /></Svg></Slot>
      <Slot $ml={15}><Text w={29}>70%</Text></Slot>
    </StatusBar>
  );
}

/* ---------- taskbar ---------- */

const TaskBar = styled.div`
  flex: none;
  height: 59px;
  display: flex;
  align-items: center;
  background: linear-gradient(90deg, #1e2229 0, #1e222a 320px, #15224d 400px, #14205a 540px, #1a1d4a 660px, #152052 760px, #171f52 900px, #1b1c38 1010px, #1c1f33 1110px, #171d45 1180px, #122256 1280px, #1f202f 1380px, #1e2229 1450px, #1e2229 100%);
`;

const Stack = styled.div<{ $ml: number; $align?: string }>`
  flex: none;
  margin-left: ${(p) => p.$ml}px;
  display: flex;
  flex-direction: column;
  align-items: ${(p) => p.$align ?? 'flex-start'};
  line-height: 20px;
  margin-top: -3px;
`;

const Apps = styled.div`
  display: flex;
  height: 59px;
  margin-left: 512px;
`;

const AppIcon = styled.div<{ $active?: boolean; $shift?: number }>`
  flex: none;
  width: 55px;
  height: 50px;
  margin-top: 4px;
  display: flex;
  flex-direction: column;
  align-items: center;
  padding-top: 10px;
  padding-right: ${(p) => p.$shift ?? 0}px;
  position: relative;
  ${(p) => p.$active && css`
    &::before {
      content: '';
      position: absolute;
      inset: 0 9px 0 2px;
      border-radius: 5px;
      background: rgba(255, 255, 255, 0.1);
      box-shadow: 5px 0 0 rgba(255, 255, 255, 0.06);
    }
  `}
`;

const Running = styled.div<{ $active?: boolean }>`
  position: relative;
  margin-top: 5px;
  width: ${(p) => (p.$active ? 20 : 8)}px;
  height: 4px;
  border-radius: 2px;
  background: ${(p) => (p.$active ? '#4cc2ff' : '#9a9dab')};
`;

const Badge = styled.div`
  position: absolute;
  top: 4px;
  right: 6px;
  width: 20px;
  height: 20px;
  border-radius: 50%;
  background: #4cc2ff;
  color: #000;
  display: flex;
  align-items: center;
  justify-content: center;
`;

const Notice = styled.div`
  flex: none;
  margin-left: 9px;
  width: 20px;
  height: 20px;
  border-radius: 50%;
  background: #4cc2ff;
  color: #000;
  display: flex;
  align-items: center;
  justify-content: center;
`;

const Ico = styled.svg`
  display: block;
  position: relative;
  flex: none;
  width: 30px;
  height: 30px;
  overflow: visible;
`;

const WordWrap = styled.div`
  position: relative;
  height: 30px;
`;

const Gradients = () => (
  <defs>
    <linearGradient id="win" x1="0" y1="0" x2="1" y2="1"><stop offset="0" stopColor="#7df0ff" /><stop offset="1" stopColor="#0a93f5" /></linearGradient>
    <linearGradient id="chat" x1="0" y1="0" x2="1" y2="1"><stop offset="0" stopColor="#9a6fc4" /><stop offset=".5" stopColor="#6268d6" /><stop offset="1" stopColor="#4f55c4" /></linearGradient>
    <linearGradient id="fold" x1="0" y1="0" x2="1" y2="1"><stop offset="0" stopColor="#ffd96a" /><stop offset="1" stopColor="#fcbf22" /></linearGradient>
    <linearGradient id="edge" x1="0" y1="0" x2="1" y2=".4"><stop offset="0" stopColor="#1f8fe0" /><stop offset=".5" stopColor="#35c1d8" /><stop offset="1" stopColor="#6fe04a" /></linearGradient>
    <linearGradient id="edge2" x1="0" y1="0" x2="0" y2="1"><stop offset="0" stopColor="#1b9de2" /><stop offset="1" stopColor="#0a6fd0" /></linearGradient>
    <linearGradient id="op" x1="0" y1="0" x2="0" y2="1"><stop offset="0" stopColor="#ff1b2d" /><stop offset="1" stopColor="#a70014" /></linearGradient>
    <linearGradient id="moon" x1="0" y1="0" x2="0" y2="1"><stop offset="0" stopColor="#f8c83c" /><stop offset="1" stopColor="#f07f1a" /></linearGradient>
    <linearGradient id="wa" x1="0" y1="0" x2="0" y2="1"><stop offset="0" stopColor="#5bd066" /><stop offset="1" stopColor="#20b038" /></linearGradient>
    <linearGradient id="cld" x1="0" y1="0" x2="0" y2="1"><stop offset="0" stopColor="#7fa8ee" /><stop offset="1" stopColor="#dbe6fb" /></linearGradient>
  </defs>
);

function Task() {
  return (
    <TaskBar>
      <Slot $ml={24} $w={30}>
        <Ico viewBox="0 0 30 30">
          <Gradients />
          <path d="M20 .5c11 5.500 11 21 0 25-7 2-14-1-16.500-7 8 1 19-4 16.500-18z" fill="url(#moon)" />
          <path d="M5 10.500a4 4 0 0 1 0-7.500 4.500 4.500 0 0 1 8.500 0 4 4 0 0 1 1 7.500z" fill="url(#cld)" />
        </Ico>
      </Slot>
      <Stack $ml={10}>
        <Text w={32}>27°C</Text>
        <Text w={82} color="#c3c5c8">Mostly clear</Text>
      </Stack>
      <Apps>
        <AppIcon $shift={2}><Ico viewBox="0 0 30 30"><path fill="url(#win)" d="M.5 1a1 1 0 0 1 1-1H14.200v14.200H.500zM15.500 0h13a1 1 0 0 1 1 1v13.200h-14zM.5 15.500h13.700V29.500H1.500a1 1 0 0 1-1-1zM15.500 15.500h14v13a1 1 0 0 1-1 1h-13z" /></Ico></AppIcon>
        <AppIcon $shift={1}><Ico viewBox="0 0 30 30"><rect y="8" x="1" width="22" height="20" rx="1.500" fill="#5c5c5c" /><rect x="8" y="0" width="22" height="21" rx="1.500" fill="#f4f4f4" /><path d="M8 8h15v13H8z" fill="#bdbdbd" /></Ico></AppIcon>
        <AppIcon><Ico viewBox="0 0 30 30"><path d="M1 29l1.500-6.500A14 14 0 1 1 10 28.500z" fill="url(#chat)" /><rect x="7.500" y="8.500" width="12" height="12" rx="2" fill="#fff" /><path d="M20.500 12.500l3.500-3v10.500l-3.500-3z" fill="#fff" /></Ico></AppIcon>
        <AppIcon>
          <Ico viewBox="0 0 30 30"><path d="M0 3a1.500 1.500 0 0 1 1.500-1.500H10l3 3.500v4H0z" fill="#e09b10" /><path d="M0 7h12l2-2.500h15a1 1 0 0 1 1 1V27a1 1 0 0 1-1 1H1a1 1 0 0 1-1-1z" fill="url(#fold)" /><path d="M5 28v-4.500a3 3 0 0 1 3-3h14a3 3 0 0 1 3 3V28z" fill="#1580d2" /><path d="M9 24.500h12" stroke="#0a4f94" strokeWidth="1.500" /></Ico>
          <Running />
        </AppIcon>
        <AppIcon>
          <Ico viewBox="0 0 30 30"><path d="M.5 14C1.500 5 8 0 15 0c9 0 15 6 15 12.500 0 5-3.500 8-8 8-4 0-5.500-1.500-4.500-3 2-3 .5-7.500-4.500-8.500C7 8 2 11 .5 14z" fill="url(#edge)" /><path d="M.5 14C2 9 8 7 12.500 9c-4 2-5 7-3 12s7 8 13 6c-3 2.500-7 3.500-11 2.500C4 27.500-.5 21 .5 14z" fill="url(#edge2)" /><path d="M12.500 9.500C8 13 9 20 13 24c4 3.500 10 3.500 14.500.5-3 4-8 6.500-14 4.500C5 26 3 14 12.500 9.500z" fill="#10509a" /></Ico>
          <Running />
        </AppIcon>
        <AppIcon><Ico viewBox="0 0 30 30"><path d="M8.500 5V1.500h13V5" stroke="#2aa9e8" strokeWidth="2" fill="none" /><path d="M.5 4h29v22a3.500 3.500 0 0 1-3.500 3.500H4A3.500 3.500 0 0 1 .5 26z" fill="#f3f3f3" /><path d="M9 11.500h5.200v5H9z" fill="#f25022" /><path d="M15.500 11.500h5.200v5h-5.200z" fill="#7fba00" /><path d="M9 17.700h5.200v5H9z" fill="#00a4ef" /><path d="M15.500 17.700h5.200v5h-5.200z" fill="#ffb900" /></Ico></AppIcon>
        <AppIcon><Ico viewBox="0 0 30 30"><path d="M22 0L7 13.500 3 10 .5 11.200v2L22 29.500V22L9 14.700 22 8z" fill="#1277bd" /><path d="M.5 18.500L3 20l19-16V0z" fill="#0f6cb0" /><path d="M.5 11.500L3 10l19 15.500v4L.5 13.500z" fill="#1b8ad6" /><path d="M22 0l7.500 3.200v23L22 29.500z" fill="#2ba7f2" /></Ico></AppIcon>
        <AppIcon>
          <Ico viewBox="0 0 30 30"><circle cx="15" cy="15" r="15" fill="#fbc116" /><path d="M15 15L2 7.500a15 15 0 0 0 11 22.400L19 19z" fill="#2a9a49" /><path d="M2 7.500a15 15 0 0 1 26 0L15 8.500l-6 9z" fill="#e33b2e" /><circle cx="15" cy="15" r="7" fill="#fff" /><circle cx="15" cy="15" r="5.700" fill="#3077e8" /></Ico>
          <Running />
        </AppIcon>
        <AppIcon><Ico viewBox="0 0 30 30"><path fillRule="evenodd" fill="url(#op)" d="M15 0a15 15 0 1 0 0 30 15 15 0 0 0 0-30zM15 3c3.500 0 6 5.500 6 12s-2.500 12-6 12-6.500-5.500-6.500-12S11.500 3 15 3z" /><path d="M18 2.500C27 2 30 9 30 15S27 27.500 18 27.500c3.500-3 4-8 4-12.500s-.5-9.500-4-12.500z" fill="#ff4a4a" opacity=".75" /></Ico></AppIcon>
        <AppIcon $active><WordWrap><WordLogo size={29} /></WordWrap><Running $active /></AppIcon>
        <AppIcon>
          <Ico viewBox="0 0 30 30"><path d="M1 29.500l2-7.500A14 14 0 1 1 8.500 27.500z" fill="url(#wa)" stroke="#fff" strokeWidth="2.500" /><path d="M9 8.500c2-2 3-.5 4 2.500.3 1-1.500 2-1 3 1 2 2.500 3.500 4.800 4.300 1 .2 1.700-2 2.700-1.600 3 1.300 4 1.800 2.500 3.800-4 4-15-3.500-13-12z" fill="#fff" /></Ico>
          <Running />
          <Badge><Text w={8}>6</Text></Badge>
        </AppIcon>
      </Apps>
      <Slot $ml={293} $w={14}><Chevron up w={14} sw={1.8} /></Slot>
      <Slot $ml={23} $w={22}>
        <Svg width="22" height="20" viewBox="0 0 22 20">
          <path d="M6 13a5 5 0 0 1 1-9.500 6 6 0 0 1 11 2.500l1 7z" fill="#8c8c8c" stroke="none" />
          <path d="M4 14.500a4 4 0 0 1 0-8q5-1 8 8z" fill="#d9d9d9" stroke="none" />
          <circle cx="15.500" cy="13" r="5.800" fill="#fff" stroke="none" />
          <path stroke="#1c6fd0" strokeWidth="1.600" d="M12 12.500a3.700 3.700 0 0 1 6-2M19 13.500a3.700 3.700 0 0 1-6 2M18.500 8.500v2.500H16M12.500 17.500V15H15" />
        </Svg>
      </Slot>
      <Stack $ml={21} $align="center">
        <Text w={29}>ENG</Text>
        <Text w={15}>IN</Text>
      </Stack>
      <Slot $ml={23} $w={20}>
        <Svg width="20" height="16" viewBox="0 0 20 16"><g stroke="#fff" strokeWidth="1.500"><path d="M.7 6a13 13 0 0 1 18.600 0M3.500 9a9 9 0 0 1 13 0M6.300 12a5.200 5.200 0 0 1 7.400 0" /><circle cx="10" cy="14.300" r="1.200" fill="#fff" stroke="none" /></g></Svg>
      </Slot>
      <Slot $ml={10} $w={20}>
        <Svg width="20" height="16" viewBox="0 0 20 16"><path stroke="#fff" d="M.8 5.500H4L8.500 1v14L4 10.500H.8zM12.500 5l6 6M18.500 5l-6 6" /></Svg>
      </Slot>
      <Slot $ml={10} $w={20}>
        <Svg width="20" height="18" viewBox="0 0 20 18"><path stroke="#fff" d="M8 4h7a2 2 0 0 1 2 2v7a2 2 0 0 1-2 2H3a2 2 0 0 1-2-2v-3M19 7.500v4" /><path fill="#fff" stroke="none" d="M9 6h6.500v7.500H4V10zM4.500-.5L0 7h3L1.500 11 7.500 5h-3z" /></Svg>
      </Slot>
      <Stack $ml={20} $align="flex-end">
        <Text w={37}>22:55</Text>
        <Text w={78}>12-07-2023</Text>
      </Stack>
      <Notice><Text w={7} size={12}>4</Text></Notice>
    </TaskBar>
  );
}

export default function App() {
  return (
    <Screen>
      <Global />
      <Title />
      <Tabs />
      <Ribbon>
        <Clipboard />
        <FontGroup />
        <ParagraphGroup />
        <StylesGroup />
        <EditingGroup />
        <CollapseArea>
          <Chevron w={15} sw={2.2} />
        </CollapseArea>
      </Ribbon>
      <Document />
      <Status />
      <Task />
    </Screen>
  );
}
